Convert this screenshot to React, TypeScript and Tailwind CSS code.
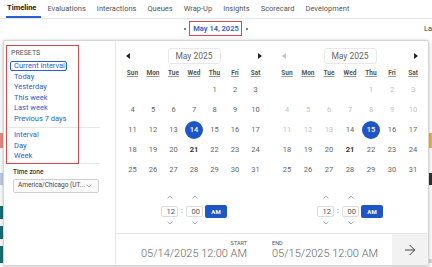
import { ArrowRight, ChevronDown } from 'lucide-react';

const TABS = ['Evaluations', 'Interactions', 'Queues', 'Wrap-Up', 'Insights', 'Scorecard', 'Development'];
const PRESETS = ['Today', 'Yesterday', 'This week', 'Last week', 'Previous 7 days'];
const RANGES = ['Interval', 'Day', 'Week'];
const DAYS = ['Sun', 'Mon', 'Tue', 'Wed', 'Thu', 'Fri', 'Sat'];

// May 2025 starts on a Thursday
const mayWeeks = () => {
    const cells: (number | null)[] = [null, null, null, null];
    for (let d = 1; d <= 31; d++) cells.push(d);
    while (cells.length % 7) cells.push(null);
    const weeks: (number | null)[][] = [];
    for (let i = 0; i < cells.length; i += 7) weeks.push(cells.slice(i, i + 7));
    return weeks;
};

const Triangle = ({ left, muted }: { left?: boolean; muted?: boolean }) => (
    <svg width="4" height="6" viewBox="0 0 4 6">
        <polygon points={left ? '4,0 0,3 4,6' : '0,0 4,3 0,6'} fill={muted ? '#c4c4c4' : '#222'} />
    </svg>
);

const Chevron = ({ up }: { up?: boolean }) => (
    <div className="flex h-[8px] items-center justify-center">
        <svg width="6" height="4" viewBox="0 0 6 4">
            <polyline points={up ? '0.5,3.5 3,1 5.5,3.5' : '0.5,0.5 3,3 5.5,0.5'} fill="none" stroke="#8ea6d8" strokeWidth="0.9" />
        </svg>
    </div>
);

const TimeBox = ({ value }: { value: string }) => (
    <div className="flex flex-col items-center">
        <Chevron up />
        <div className="mt-[5px] flex h-[11px] w-[17px] items-center justify-end rounded-[2px] border border-[#dcdcdc] pr-[2px] text-[7.5px] text-[#555]">
            {value}
        </div>
        <div className="mt-[2px]">
            <Chevron />
        </div>
    </div>
);

const Calendar = ({
    selected,
    minDay,
    prevMuted,
    gridClass,
}: {
    selected: number
    minDay: number
    prevMuted?: boolean
    gridClass: string
}) => (
    <div className="flex w-[156px] flex-col">
        <div className="mt-[7px] flex h-[16px] items-center justify-between px-[10px]">
            <Triangle left muted={prevMuted} />
            <div className="flex h-[16px] w-[53px] items-center justify-center rounded-[3px] border border-[#e8e8e8] text-[8.5px] text-[#666]">
                May 2025
            </div>
            <Triangle />
        </div>

        <div className={`mt-[4px] grid justify-center ${gridClass}`}>
            {DAYS.map((d) => (
                <div key={d} className="flex h-[12px] items-center justify-center text-[6.5px] font-bold text-[#555] underline decoration-[#999]">
                    {d}
                </div>
            ))}
            {mayWeeks().flat().map((day, i) => (
                <div key={i} className="flex h-[20px] items-center justify-center text-[7.5px]">
                    {day === null ? null : day === selected ? (
                        <span className="flex h-[18px] w-[18px] items-center justify-center rounded-full bg-[#1f56c7] font-medium text-white">
                            {day}
                        </span>
                    ) : (
                        <span
                            className={
                                day === 21
                                    ? 'font-bold text-[#333]'
                                    : day < minDay
                                      ? 'text-[#c2c2c2]'
                                      : 'text-[#666]'
                            }
                        >
                            {day}
                        </span>
                    )}
                </div>
            ))}
        </div>

        {/* Time picker */}
        <div className="mt-[13px] flex items-start justify-center">
            <TimeBox value="12" />
            <div className="flex h-[35px] w-[8px] items-center justify-center text-[7.5px] text-[#555]">:</div>
            <TimeBox value="00" />
            <div className="ml-[2px] mt-[12px] flex h-[13px] w-[22px] items-center justify-center rounded-[2px] bg-[#1f56c7] text-[6px] font-bold text-white">
                AM
            </div>
        </div>
    </div>
);

export default function App() {
    return (
        <div className="relative h-[267px] w-[432px] overflow-hidden bg-white font-[Roboto,sans-serif]">
            {/* Tabs */}
            <div className="flex h-[19px] items-end gap-[11px] border-b border-[#e4e4e4] pl-[6px] text-[7.5px] text-[#555]">
                <div className="-mr-[5px] flex h-[18px] items-center border-b-2 border-[#2a5fcf] pl-[1px] pr-[5px] font-bold text-[#222]">
                    Timeline
                </div>
                {TABS.map((t) => (
                    <div key={t} className="flex h-[18px] items-center">
                        {t}
                    </div>
                ))}
            </div>

            {/* Date row */}
            <div className="grid h-[19px] grid-cols-[1fr_auto_1fr] items-center">
                <div />
                <div className="flex items-center gap-[7px]">
                    <span className="h-[2px] w-[2px] rounded-full bg-[#2a5fcf]" />
                    <span className="text-[7.5px] font-semibold text-[#2a5fcf]">May 14, 2025</span>
                    <span className="h-[2px] w-[2px] rounded-full bg-[#2a5fcf]" />
                </div>
                <div className="flex justify-end">
                    <div className="w-[8px] overflow-hidden whitespace-nowrap text-[7.5px] text-[#444]">La</div>
                </div>
            </div>

            {/* Page content behind the popup */}
            <div className="flex flex-col">
                <div className="h-[95px]" />
                <div className="flex h-[15px] justify-between">
                    <div className="w-[3px] bg-[#e98c80]" />
                    <div className="w-[3px] bg-[#f0b43c]" />
                </div>
                <div className="h-[25px]" />
                <div className="flex h-[12px] justify-between">
                    <div className="w-[3px] bg-[#b9d0ea]" />
                    <div className="w-[3px] bg-[#333]" />
                </div>
                <div className="h-[21px]" />
                <div className="flex h-[13px]"><div className="w-[3px] bg-[#17707a]" /></div>
                <div className="h-[7px]" />
                <div className="flex h-[13px]"><div className="w-[3px] bg-[#17707a]" /></div>
                <div className="h-[7px]" />
                <div className="flex h-[13px]"><div className="w-[3px] bg-[#17707a]" /></div>
                <div className="flex h-[4px] bg-[#d9d9d9]"><div className="w-[23px] bg-[#17707a]" /></div>
            </div>

            {/* Date range popup */}
            <div className="absolute left-[3px] top-[40px] flex h-[226px] w-[426px] rounded-[2px] border border-[#d6d6d6] bg-white shadow-[0_1px_4px_rgba(0,0,0,0.25)]">
                {/* Presets */}
                <div className="flex w-[112px] flex-col border-r border-[#e6e6e6] pl-[4px] pt-[8px]">
                    <div className="flex h-[8px] items-center pl-[3px] text-[7px] text-[#555]">PRESETS</div>
                    <div className="ml-[2px] mt-[4px] flex h-[10px] w-[57px] items-center rounded-[2px] border border-[#2a5fcf] pl-[3px] text-[7.5px] text-[#2a5fcf]">
                        Current interval
                    </div>
                    {PRESETS.map((p) => (
                        <div key={p} className="flex h-[10.5px] items-center pl-[6px] text-[7.5px] text-[#2a5fcf]">
                            {p}
                        </div>
                    ))}
                    <div className="mt-[3px] w-[92px] border-t border-[#e6e6e6]" />
                    <div className="mt-[2px]">
                        {RANGES.map((r) => (
                            <div key={r} className="flex h-[10.5px] items-center pl-[6px] text-[7.5px] text-[#2a5fcf]">
                                {r}
                            </div>
                        ))}
                    </div>
                    <div className="mt-[1.5px] w-[92px] border-t border-[#e6e6e6]" />
                    <div className="ml-[5px] mt-[5px] flex h-[8px] items-center text-[6.5px] font-medium text-[#333]">Time zone</div>
                    <div className="ml-[5px] mt-[2px] flex h-[14px] w-[86px] items-center justify-between rounded-[2px] border border-[#cfcfcf] bg-[#fafafa] pl-[4px] pr-[5px] text-[6.5px] text-[#444]">
                        <span className="whitespace-nowrap">America/Chicago (UT...</span>
                        <ChevronDown size={8} strokeWidth={1.5} color="#555" />
                    </div>
                </div>

                {/* Calendars + footer */}
                <div className="flex flex-1 flex-col">
                    <div className="flex flex-1">
                        <Calendar selected={14} minDay={0} gridClass="grid-cols-[repeat(7,20.5px)]" />
                        <Calendar selected={15} minDay={14} prevMuted gridClass="grid-cols-[repeat(7,21px)]" />
                    </div>
                    <div className="flex h-[32px] border-t border-[#e6e6e6]">
                        <div className="flex w-[156px] flex-col items-end pr-[25px] pt-[6px]">
                            <div className="h-[6px] text-[5.5px] leading-[6px] text-[#555]">START</div>
                            <div className="mt-[2px] h-[12px] text-[11px] font-light leading-[12px] text-[#666]">05/14/2025 12:00 AM</div>
                        </div>
                        <div className="flex flex-1 flex-col pt-[6px]">
                            <div className="h-[6px] text-[5.5px] leading-[6px] text-[#555]">END</div>
                            <div className="mt-[2px] h-[12px] text-[11px] font-light leading-[12px] text-[#666]">05/15/2025 12:00 AM</div>
                        </div>
                        <div className="flex w-[36px] items-center justify-center bg-[#f2f2f2]">
                            <ArrowRight size={16} strokeWidth={1.5} color="#444" />
                        </div>
                    </div>
                </div>

                {/* Annotation boxes */}
                <div className="pointer-events-none absolute left-[2px] top-[4px] h-[119px] w-[73px] border-[1.5px] border-[#e24545]" />
            </div>

            <div className="pointer-events-none absolute left-[189px] top-[21px] h-[15px] w-[53px] border-[1.5px] border-[#e24545]" />
        </div>
    );
}
